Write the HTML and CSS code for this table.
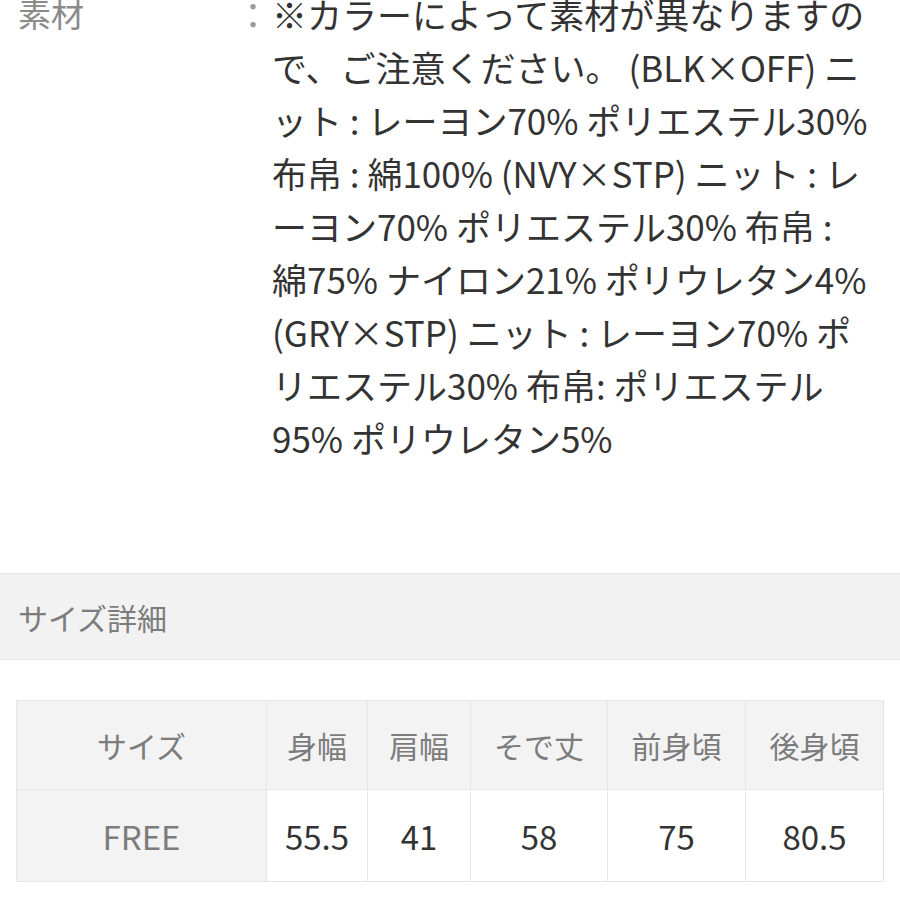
FILE: index.html
```html
<!DOCTYPE html>
<html lang="ja">
<head>
<meta charset="utf-8">
<link rel="stylesheet" href="styles.css">
</head>
<body>
<div class="spec">
  <div class="spec-row">
    <div class="spec-label">素材</div>
    <div class="spec-colon">：</div>
    <div class="spec-value">※カラーによって素材が異なりますの<br>で、ご注意ください。 (BLK×OFF) ニ<br>ット : レーヨン70% ポリエステル30%<br>布帛 : 綿100% (NVY×STP) ニット : レ<br>ーヨン70% ポリエステル30% 布帛 :<br>綿75% ナイロン21% ポリウレタン4%<br>(GRY×STP) ニット : レーヨン70% ポ<br>リエステル30% 布帛: ポリエステル<br>95% ポリウレタン5%</div>
  </div>
</div>
<div class="size-head">サイズ詳細</div>
<table class="size-table">
  <colgroup>
    <col class="c-size">
    <col class="c1">
    <col class="c2">
    <col class="c3">
    <col class="c4">
    <col class="c5">
  </colgroup>
  <tr class="head-row">
    <th>サイズ</th>
    <th>身幅</th>
    <th>肩幅</th>
    <th>そで丈</th>
    <th>前身頃</th>
    <th>後身頃</th>
  </tr>
  <tr class="data-row">
    <th>FREE</th>
    <td>55.5</td>
    <td>41</td>
    <td>58</td>
    <td>75</td>
    <td>80.5</td>
  </tr>
</table>
</body>
</html>
```
FILE: styles.css
```css
html, body {
  margin: 0;
  padding: 0;
  background: #fff;
}
body {
  width: 900px;
  height: 900px;
  overflow: hidden;
  font-family: "Noto Sans CJK JP", "Noto Sans", sans-serif;
  color: #333;
}
.spec {
  margin-top: -13px;
  height: 586px;
}
.spec-row {
  display: grid;
  grid-template-columns: 234px 38px 1fr;
  font-size: 35px;
  line-height: 53px;
}
.spec-label {
  padding-left: 18px;
  font-size: 33px;
  color: #8a8a8a;
}
.spec-colon {
  color: #9a9a9a;
  text-align: center;
}
.spec-value {
  color: #333;
  white-space: nowrap;
}
.size-head {
  height: 85px;
  border-top: 1px solid #e6e6e6;
  border-bottom: 1px solid #e6e6e6;
  background: #f2f2f2;
  display: flex;
  align-items: center;
  padding-left: 18px;
  font-size: 30px;
  color: #7c7c7c;
}
.size-table {
  margin: 40px 0 0 16px;
  width: 867px;
  border-collapse: collapse;
  table-layout: fixed;
  font-size: 30px;
}
.size-table th,
.size-table td {
  border: 1px solid #e6e6e6;
  text-align: center;
  padding: 0;
  font-weight: normal;
}
.head-row th {
  height: 88px;
  background: #f3f3f3;
  color: #7c7c7c;
}
.data-row th,
.data-row td {
  height: 91px;
  font-family: "Liberation Sans Narrow", "Noto Sans CJK JP", sans-serif;
  font-size: 33px;
}
.data-row th {
  background: #f3f3f3;
  color: #7c7c7c;
}
.data-row td {
  background: #fff;
  color: #333;
}
.c-size { width: 250px; }
.c1 { width: 101px; }
.c2 { width: 103px; }
.c3 { width: 137px; }
.c4 { width: 138px; }
.c5 { width: 138px; }
```
